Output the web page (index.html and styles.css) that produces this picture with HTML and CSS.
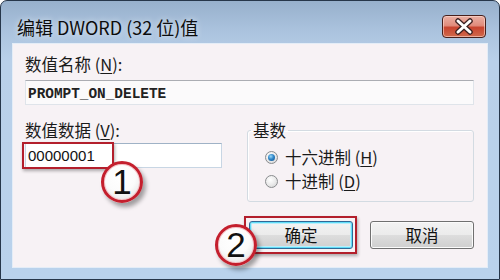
FILE: index.html
```html
<!DOCTYPE html>
<html lang="zh-CN">
<head>
<meta charset="utf-8">
<title>编辑 DWORD (32 位)值</title>
<link rel="stylesheet" href="styles.css">
</head>
<body>
<div class="window">
  <div class="titlebar">
    <div class="title">编辑 DWORD (32 位)值</div>
    <button class="close" aria-label="关闭">
      <svg width="44" height="23" viewBox="0 0 44 23">
        <path d="M16 6 L28 17 M28 6 L16 17" stroke="#3a2020" stroke-width="5.5" stroke-linecap="round"/>
        <path d="M16 6 L28 17 M28 6 L16 17" stroke="#ffffff" stroke-width="3" stroke-linecap="round"/>
      </svg>
    </button>
  </div>
  <div class="client">
    <div class="label">数值名称 (<u>N</u>):</div>
    <div class="textbox mono">PROMPT_ON_DELETE</div>
    <div class="row">
      <div class="data-col">
        <div class="label">数值数据 (<u>V</u>):</div>
        <div class="textbox value-box"><span class="value">00000001</span><span class="mark mark-value"></span></div>
      </div>
      <fieldset class="group">
        <legend>基数</legend>
        <div class="group-body">
          <div class="radio"><span class="dot on"></span><span class="radio-text">十六进制 (<u>H</u>)</span></div>
          <div class="radio"><span class="dot"></span><span class="radio-text">十进制 (<u>D</u>)</span></div>
        </div>
      </fieldset>
    </div>
    <div class="buttons">
      <div class="btn-wrap"><button class="btn default">确定</button><span class="mark mark-ok"></span></div>
      <button class="btn">取消</button>
    </div>
  </div>
  <div class="badge badge-1">1</div>
  <div class="badge badge-2">2</div>
</div>
</body>
</html>
```
FILE: styles.css
```css
html, body {
  margin: 0;
  padding: 0;
  background: #ffffff;
}
body {
  font-family: "Noto Sans CJK SC", "Noto Sans", sans-serif;
  color: #1a1a1a;
}
.window {
  position: relative;
  width: 500px;
  height: 280px;
  box-sizing: border-box;
  border: 1px solid #26364a;
  border-radius: 7px 7px 0 0;
  background: linear-gradient(to bottom, #97b0cc 0px, #abc3de 30px, #b9d0e9 60px, #b9d2ec 100%);
  padding: 0 11px 11px 11px;
  display: flex;
  flex-direction: column;
}
.titlebar {
  height: 42px;
  margin: 0 -11px;
  padding: 0 13px 0 16px;
  display: flex;
  align-items: flex-start;
  justify-content: space-between;
}
.title {
  padding-top: 15px;
  font-size: 18px;
  line-height: 22px;
  color: #0c0c0c;
  text-shadow: 0 0 6px rgba(255,255,255,0.8);
  white-space: nowrap;
}
.close {
  margin-top: 14px;
  width: 44px;
  height: 23px;
  padding: 0;
  border: 1px solid #47201c;
  border-radius: 4px;
  box-sizing: border-box;
  background: linear-gradient(to bottom, #eab0a4 0%, #e18c7c 45%, #c8442f 55%, #d06a4c 100%);
  box-shadow: inset 0 0 0 1px rgba(255,220,210,0.6);
  display: flex;
  align-items: center;
  justify-content: center;
}
.close svg {
  display: block;
  margin: -1px;
}
.client {
  flex: 1;
  border: 1px solid #e4edf7;
  background: #f7f2f5;
  padding: 10px 13px 0 12px;
  display: flex;
  flex-direction: column;
}
.label {
  font-size: 16.5px;
  line-height: 20px;
  height: 20px;
  white-space: nowrap;
}
u {
  text-decoration: underline;
  text-underline-offset: 2px;
}
.textbox {
  position: relative;
  box-sizing: border-box;
  height: 25px;
  border: 1px solid #dfe4ea;
  border-top-color: #abadb3;
  background: #fbfafb;
  padding: 0 2px;
  display: flex;
  align-items: center;
}
.label + .textbox {
  margin-top: 6px;
}
.mono {
  font-family: "Liberation Mono", monospace;
  font-weight: bold;
  font-size: 14.4px;
  color: #222;
  padding-top: 3px;
}
.row {
  margin-top: 15px;
  display: flex;
  align-items: flex-start;
}
.data-col {
  width: 197px;
  flex: none;
}
.data-col .label + .textbox {
  margin-top: 3px;
}
.value-box {
  border-color: #c8d6e4;
  border-top-color: #9fb2c6;
  background: #ffffff;
}
.value {
  font-family: "Liberation Sans", sans-serif;
  font-size: 15px;
  color: #111;
}
.mark {
  position: absolute;
  box-sizing: border-box;
  border: 2px solid #b31f2c;
  box-shadow: 1px 2px 3px rgba(0,0,0,0.3);
  pointer-events: none;
}
.mark-value {
  left: -4px;
  top: -2px;
  width: 92px;
  bottom: -2px;
}
.group {
  flex: 1;
  margin: 0 0 0 25px;
  padding: 0;
  min-width: 0;
  height: 82px;
  box-sizing: border-box;
  border: 1px solid #d3dbe2;
  border-radius: 3px;
  box-shadow: inset 1px 1px 0 #ffffff;
}
.group legend {
  margin-left: 3px;
  padding: 0 2px;
  font-size: 16.5px;
  line-height: 20px;
}
.group-body {
  padding: 5px 0 0 17px;
}
.radio {
  height: 24px;
  display: flex;
  align-items: center;
  gap: 7px;
  font-size: 16.5px;
  white-space: nowrap;
}
.radio-text {
  line-height: 20px;
}
.dot {
  position: relative;
  flex: none;
  width: 13px;
  height: 13px;
  box-sizing: border-box;
  border-radius: 50%;
  border: 1px solid #8a8c8e;
  background: radial-gradient(circle at 40% 35%, #ffffff 0%, #ebebeb 50%, #cfd0d1 100%);
}
.dot.on::after {
  content: "";
  position: absolute;
  left: 2px;
  top: 2px;
  width: 7px;
  height: 7px;
  border-radius: 50%;
  background: radial-gradient(circle at 40% 35%, #9ad8f7 0%, #2f86c9 45%, #0e4d86 100%);
}
.buttons {
  margin-top: 19px;
  display: flex;
  justify-content: flex-end;
  align-items: center;
  gap: 17px;
}
.btn-wrap {
  position: relative;
  display: flex;
}
.btn {
  width: 104px;
  height: 28px;
  box-sizing: border-box;
  padding: 0;
  border: 1px solid #707070;
  border-radius: 3px;
  background: linear-gradient(to bottom, #f3f3f3 0%, #ebebeb 49%, #dddddd 51%, #cfcfcf 100%);
  box-shadow: inset 0 0 0 1px #fbfbfb;
  font-family: "Noto Sans CJK SC", sans-serif;
  font-size: 16.5px;
  line-height: 20px;
  color: #111;
}
.btn.default {
  border-color: #2f6996;
  box-shadow: inset 0 0 0 1px #5fdcf8, inset 0 0 0 2px #b9eefb;
}
.mark-ok {
  left: -5px;
  top: -5px;
  right: -4px;
  bottom: -5px;
}
.badge {
  position: absolute;
  width: 42px;
  height: 42px;
  box-sizing: border-box;
  border-radius: 50%;
  border: 3px solid #c41f2d;
  background: radial-gradient(circle at 45% 35%, #ffffff 0%, #fbfbfb 50%, #d9d9d9 100%);
  box-shadow: inset 0 0 0 1px #f5c4c8, 3px 4px 4px rgba(0,0,0,0.35);
  font-family: "Liberation Sans", sans-serif;
  font-size: 35px;
  line-height: 36px;
  text-align: center;
  color: #111;
}
.badge-1 {
  left: 100px;
  top: 160px;
}
.badge-2 {
  left: 214px;
  top: 223px;
}
```
